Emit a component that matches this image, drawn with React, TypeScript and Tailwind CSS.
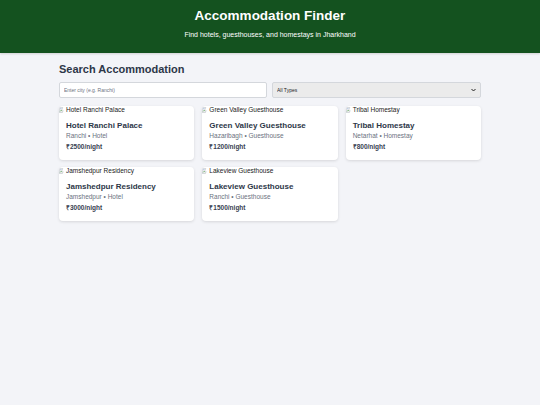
import React, { useState } from "react";

const PLACES = [
  { name: "Hotel Ranchi Palace", city: "Ranchi", type: "Hotel", price: 2500 },
  { name: "Green Valley Guesthouse", city: "Hazaribagh", type: "Guesthouse", price: 1200 },
  { name: "Tribal Homestay", city: "Netarhat", type: "Homestay", price: 800 },
  { name: "Jamshedpur Residency", city: "Jamshedpur", type: "Hotel", price: 3000 },
  { name: "Lakeview Guesthouse", city: "Ranchi", type: "Guesthouse", price: 1500 },
];

// little broken-image glyph, like the browser shows for a missing picture
const BrokenImg = () => (
  <svg width="6" height="6" viewBox="0 0 16 16" className="shrink-0">
    <path d="M1 1h9l-2 6 3 3-2 5H1z" fill="#f1f1f1" stroke="#9ca3af" strokeWidth="1" />
    <path d="M3 12l3-4 2 3" fill="none" stroke="#4b9b4b" strokeWidth="1.4" />
    <circle cx="5" cy="4.5" r="1.3" fill="#5b8fd6" />
  </svg>
);

export default function App() {
  const [city, setCity] = useState("");
  const [kind, setKind] = useState("");

  const list = PLACES.filter(
    (p) =>
      p.city.toLowerCase().includes(city.toLowerCase()) &&
      (kind === "" || p.type === kind)
  );

  return (
    <div className="min-h-[405px] bg-[#f3f4f8] font-['Liberation_Sans',Arial,sans-serif]">
      <header className="h-[53px] bg-[#14521f] text-white flex flex-col items-center pt-[7px] shadow-[0_1px_2px_rgba(0,0,0,0.15)]">
        <h1 className="text-[13.5px] font-bold leading-[18px]">Accommodation Finder</h1>
        <p className="text-[7px] leading-[9px] mt-[5px] text-white">
          Find hotels, guesthouses, and homestays in Jharkhand
        </p>
      </header>

      <main className="w-[422px] mx-auto pt-[9px]">
        <h2 className="text-[11px] font-bold leading-[14px] text-[#2d3748]">Search Accommodation</h2>

        <div className="flex gap-[5px] mt-[6px]">
          <input
            value={city}
            onChange={(e) => setCity(e.target.value)}
            placeholder="Enter city (e.g. Ranchi)"
            className="block w-[208px] h-[16px] bg-white border border-[#d4d7dc] rounded-[2px] px-[4px] text-[5px] text-[#374151] placeholder:text-[#6b7280] outline-none"
          />
          <div className="relative flex-1 h-[16px]">
            <select
              value={kind}
              onChange={(e) => setKind(e.target.value)}
              className="block appearance-none w-full h-[16px] bg-[#ebebeb] border border-[#d4d7dc] rounded-[2px] px-[4px] py-0 text-[5px] leading-[14px] text-[#222] outline-none"
            >
              <option value="">All Types</option>
              <option value="Hotel">Hotel</option>
              <option value="Guesthouse">Guesthouse</option>
              <option value="Homestay">Homestay</option>
            </select>
            <svg width="5" height="4" viewBox="0 0 10 8" className="absolute right-[5px] top-[6px] pointer-events-none">
              <path d="M1 2l4 4 4-4" fill="none" stroke="#222" strokeWidth="2" />
            </svg>
          </div>
        </div>

        <div className="grid grid-cols-3 gap-x-[8px] gap-y-[7px] mt-[8px]">
          {list.map((p) => (
            <div key={p.name} className="bg-white rounded-[4px] shadow-[0_1px_3px_rgba(0,0,0,0.12)] h-[54px] overflow-hidden">
              <div className="flex items-center gap-[1px] h-[8px] text-[6.5px] leading-[8px] text-[#222]">
                <BrokenImg />
                <span>{p.name}</span>
              </div>
              <div className="px-[7px] pt-[7px]">
                <h3 className="text-[8px] font-bold leading-[10px] text-[#2d3748]">{p.name}</h3>
                <p className="text-[6.5px] leading-[8px] text-[#6b7280] mt-[1px]">
                  {p.city} • {p.type}
                </p>
                <p className="text-[6.5px] font-bold leading-[8px] text-[#374151] mt-[3px]">₹{p.price}/night</p>
              </div>
            </div>
          ))}
        </div>
      </main>
    </div>
  );
}
